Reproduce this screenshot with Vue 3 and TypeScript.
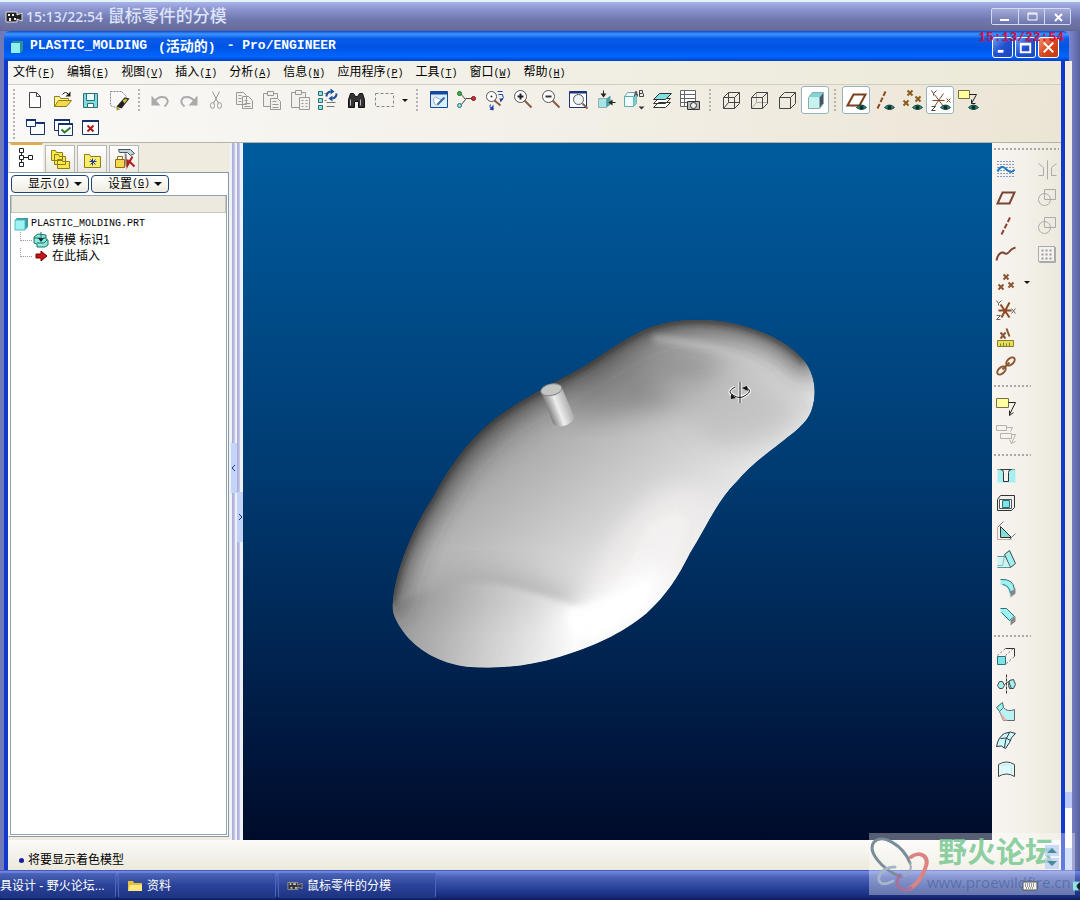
<script setup lang="ts">
interface Tool {
  id: string
  label: string
  pressed?: boolean
  arrow?: boolean
}
interface Menu {
  text: string
  key: string
}

const box = '-0.5 -0.5 28 28'
const eye =
  '<path d="M14 21q5-5 10 0q-5 4-10 0z" fill="#2f8f83" stroke="#16443f"/><circle cx="19" cy="21" r="2" fill="#0c2f2c"/>'
const cube = '<path d="M6 11h11v11H6zM6 11l5-5h11v11l-5 5M17 11l5-5"/>'
const lens =
  '<circle cx="12" cy="10" r="6" fill="#fff" stroke="#555"/><path d="M16 14l7 7" stroke="#8a5a44" stroke-width="2"/>'

const icons: Record<string, string> = {
  new: '<path d="M8 6h7l4 4v11H8zM15 6v4h4" fill="#fff" stroke="#444"/>',
  open: '<path d="M5 20V10h5l1 2h8v3" fill="#fff7a0" stroke="#8f7d18"/><path d="M5 20l4-6h13l-5 6z" fill="#f5d94a" stroke="#8f7d18"/><path d="M13 8q3-4 6 0" fill="none" stroke="#222"/><path d="M21 5v5h-5z" fill="#222"/>',
  save: '<path d="M6 7h14v14H6z" fill="#7fdbe0" stroke="#2c6f78"/><path d="M9 7h8v7H9z" fill="#e9fbfb" stroke="#2c6f78"/><path d="M10 17h6v4h-6z" fill="#fff" stroke="#2c6f78"/>',
  erase: '<path d="M5 5h11l5 5-8 12-8-3z" fill="#f8f8f8" stroke="#888" stroke-dasharray="2 1"/><path d="M11 20l8-9 5 1-8 10z" fill="#222"/><path d="M17 14l3-2 2 1-3 4z" fill="#c8bf3c"/><path d="M11 20l4 3-4 1z" fill="#a8a030"/>',
  undo: '<path d="M8 15q4-6 11-4q5 4-1 9" fill="none" stroke="#aaa" stroke-width="2"/><path d="M5 9v10h9z" fill="#aaa"/>',
  redo: '<path d="M20 15q-4-6-11-4q-5 4 1 9" fill="none" stroke="#aaa" stroke-width="2"/><path d="M23 9v10h-9z" fill="#aaa"/>',
  cut: '<g fill="none" stroke="#999"><path d="M10 5l6 12M17 5l-6 12"/><ellipse cx="10" cy="19" rx="2" ry="3"/><ellipse cx="17" cy="19" rx="2" ry="3"/></g>',
  copy: '<g fill="#f3f1ec" stroke="#999"><path d="M6 6h7l3 3v9H6zM12 10h6l4 4v8H12z"/><path d="M8 9h3M8 12h3M8 15h3M14 14h3M14 17h6M14 20h6"/></g>',
  paste: '<g fill="#f3f1ec" stroke="#999"><path d="M5 7h14v13H5z"/><path d="M9 5h6v4H9z"/><path d="M12 12h7l3 3v8H12z"/><path d="M14 15h4M14 18h6M14 21h6"/></g>',
  pasteSpecial: '<g fill="#f3f1ec" stroke="#999"><path d="M5 6h14v15H5z"/><path d="M9 4h6v4H9z"/><path d="M13 11h10v12H13z"/><path d="M15 14h2M19 14h2M15 17h2M19 17h2M15 20h2M19 20h2"/></g>',
  regen: '<g fill="#8fe0dc" stroke="#2c6f78"><path d="M4 5h4v4H4zM4 12h4v4H4zM4 19h4v4H4z"/></g><path d="M10 7h2M10 14h2M12 16h9M12 20h8" stroke="#777"/><path d="M12 10q0-4 4-5M22 7q0 4-4 5" fill="none" stroke="#1c4d9c" stroke-width="2"/><path d="M16 2v6l4-3zM18 9v6l-4-3z" fill="#1c4d9c"/>',
  find: '<path d="M6 13l2-6h3l2 3h2l2-3h3l2 6v8h-6v-6h-4v6H6z" fill="#333" stroke="#111"/><path d="M8 13v6M18 13v6" stroke="#bbb"/>',
  select: '<path d="M5 7h18v13H5z" fill="none" stroke="#888" stroke-dasharray="3 2"/>',
  repaint: '<path d="M6 5h17v16H6z" fill="#d9edfb" stroke="#16489c"/><path d="M6 5h17v3H6z" fill="#16489c"/><path d="M9 12q2-3 5 0q3 1 4 2l-4 4q-5 2-5-6z" fill="#fff" stroke="#9ab"/><path d="M13 18l7-7" stroke="#356aa8" stroke-width="2"/>',
  datum: '<path d="M8 7l5 6-5 6M13 12h9" fill="none" stroke="#444"/><circle cx="7" cy="7" r="2" fill="#3bb44a" stroke="#166b22"/><circle cx="7" cy="19" r="2" fill="#8fe0e8" stroke="#2c6f78"/><circle cx="21" cy="12" r="2" fill="#d03030" stroke="#801010"/>',
  orient: '<circle cx="11" cy="10" r="5" fill="#fff" stroke="#555"/><circle cx="11" cy="10" r="1" fill="#333"/><path d="M14 14l6 5" stroke="#8a5a44" stroke-width="2"/><path d="M17 5h5M18 8h4q2 3-1 6M10 18q-2 4 3 4" fill="none" stroke="#1c3fa8"/><path d="M13 18v6l-4-1zM19 12l4 0-3 4z" fill="#1c3fa8"/>',
  zoomIn: lens + '<path d="M9 10h6M12 7v6" stroke="#222" stroke-width="2"/>',
  zoomOut: lens + '<path d="M9 10h6" stroke="#333" stroke-width="2"/>',
  refit: '<path d="M5 5h17v16H5z" fill="#fff" stroke="#1a3478"/><path d="M5 5h17v2H5z" fill="#1a3478"/><circle cx="14" cy="13" r="5" fill="#eef4fa" stroke="#555"/><path d="M18 17l5 5" stroke="#8a5a44" stroke-width="2"/>',
  reorient: '<path d="M6 12h8v9H6z" fill="#a5e7e7" stroke="#9ab"/><path d="M14 12l4-3v9l-4 3z" fill="#4d9ea0"/><path d="M11 4v6M23 16h-5" stroke="#222"/><path d="M8 7h6l-3 4zM20 13v6l-4-3z" fill="#222"/>',
  saved: '<path d="M4 10h9v10H4zM4 10l3-4h9l-3 4M13 20l3-3V7" fill="#eefcfc" stroke="#6aa"/><path d="M13 10l3-3v9l-3 4z" fill="#7cc"/><path d="M14 10l1-5h1l1 5M15 8h2M19 4h3v3h-3V4v6h4V7" fill="none" stroke="#444"/><path d="M18 20h6l-3 3z" fill="#333"/>',
  layers: '<g stroke="#333"><path d="M5 21l5-5h12l-5 5zM5 17l5-5h12l-5 5z" fill="#fff"/><path d="M5 13l6-6h12l-6 6z" fill="#7fe0e0"/></g>',
  viewmgr: '<path d="M4 4h15v16H4zM4 8h15M4 12h15M4 16h15M8 4v16" fill="#fff" stroke="#666"/><path d="M11 15h12v8H11z" fill="#bbb" stroke="#333"/><circle cx="17" cy="19" r="3" fill="#eee" stroke="#333"/>',
  wire: `<g fill="none" stroke="#444">${cube}<path d="M11 6v10h11M11 16l-5 6"/></g>`,
  hidden: `<g fill="none" stroke="#444"><path d="M11 6v10h11M11 16l-5 6" stroke="#aaa"/>${cube}</g>`,
  nohidden: `<g fill="none" stroke="#444">${cube}</g>`,
  shaded: '<path d="M7 11l4-5h11l-4 5z" fill="#7fd4d4"/><path d="M7 11h11v11H7z" fill="#c6f3f0"/><path d="M18 11l4-5v11l-4 5z" fill="#456"/><path d="M7 22V11l4-5h11v11l-4 5z" fill="none" stroke="#8aa"/>',
  planeEye: '<path d="M5 19l6-11h12l-6 11z" fill="none" stroke="#7a3e1c" stroke-width="2"/>' + eye,
  axisEye: '<path d="M7 22L15 5" fill="none" stroke="#8a4a20" stroke-width="2" stroke-dasharray="5 2"/>' + eye,
  pointEye: '<path d="M9 4l5 5M14 4l-5 5M17 10l5 5M22 10l-5 5M5 14l5 5M10 14l-5 5" stroke="#8a5a20" stroke-width="2"/>' + eye,
  csysEye: '<path d="M6 14h12M8 8l9 12M17 7l-9 13M20 12l4 4M24 12l-4 4" stroke="#7a4a28"/><path d="M5 4l2 3 3-3M7 7v2M5 20h4l-4 4h4" fill="none" stroke="#444"/>' + eye,
  noteEye: '<path d="M4 4h11v8H4z" fill="#ffffa0" stroke="#777044"/><path d="M15 8h7l-5 9M17 13v4h4" fill="none" stroke="#222"/>' + eye,
  winNew: '<path d="M9 10v10h14V8h-9" fill="#fff" stroke="#14326c" stroke-width="1"/><path d="M5 5h9v7H5z" fill="#fff" stroke="#14326c"/><path d="M5 5h9v1H5zM15 8h8v1h-8z" fill="#14326c" stroke="#14326c"/>',
  winOk: '<path d="M5 5h15v11H5z" fill="#fff" stroke="#14326c"/><path d="M5 5h15v1H5z" stroke="#14326c"/><path d="M9 9h14v12H9z" fill="#fff" stroke="#14326c"/><path d="M9 9h14v1H9z" stroke="#14326c"/><path d="M12 15l3 3 6-5" fill="none" stroke="#2a7a2a" stroke-width="2"/>',
  winX: '<path d="M5 6h16v14H5z" fill="#fff" stroke="#14326c"/><path d="M5 6h16v1H5z" stroke="#14326c"/><path d="M10 11l6 6M16 11l-6 6" stroke="#b01818" stroke-width="2"/>',
  sketch: '<path d="M5 5h18M5 8h18M5 11h18M5 14h18M5 17h18M5 20h18" stroke="#1f3f9c" stroke-dasharray="1 2"/><path d="M5 15q4-8 9-2q5 5 8 0" fill="none" stroke="#1d7ac2" stroke-width="2"/>',
  plane: '<path d="M5 19l5-11h12l-5 11z" fill="none" stroke="#7a4634" stroke-width="2"/>',
  axis: '<path d="M9 22L18 4" fill="none" stroke="#8a4634" stroke-width="2" stroke-dasharray="5 2"/>',
  curve: '<path d="M4 20q2-9 7-8q3 3 6-1q2-3 6-4" fill="none" stroke="#7a4634" stroke-width="2"/>',
  points: '<path d="M11 6l5 5M16 6l-5 5M6 16l5 5M11 16l-5 5M16 14l5 5M21 14l-5 5" stroke="#8a5630" stroke-width="2"/>',
  csys: '<path d="M6 14h13M8 8l9 13M17 6l-8 15" stroke="#8a4a24" stroke-width="2"/><path d="M19 12l4 5M23 12l-4 5M4 4l2 3 3-3M6 7v2M4 19h4l-4 4h4" fill="none" stroke="#666"/>',
  analysis: '<path d="M8 8l5 6M13 8l-5 6M14 4l3 8" stroke="#8a5630" stroke-width="2"/><path d="M5 16h16v6H5z" fill="#e5df60" stroke="#8a8020"/><path d="M8 22v-3M11 22v-4M14 22v-3M17 22v-4" stroke="#8a8020"/>',
  link: '<g fill="none" stroke="#8a5630" stroke-width="2"><ellipse cx="9" cy="18" rx="5" ry="3" transform="rotate(-42 9 18)"/><ellipse cx="18" cy="9" rx="5" ry="3" transform="rotate(-42 18 9)"/><path d="M10 17l7-7"/></g>',
  note: '<path d="M4 5h12v9H4z" fill="#ffffa0" stroke="#777044"/><path d="M16 9h7l-6 12M17 17v5l4-3" fill="none" stroke="#222"/>',
  noteOff: '<g fill="none" stroke="#b5b0a8"><path d="M4 4h10v5H4zM8 12h11v5H8zM14 6h6l-2 4M19 13h4l-4 9M17 18l2 4 4-2"/></g>',
  hole: '<path d="M5 7h18v13H5z" fill="#a5f0f0"/><path d="M8 7q3 0 3 3v9h5v-9q0-3 3-3z" fill="#f4f2ee" stroke="#333"/><path d="M5 7h18" stroke="#444" stroke-dasharray="1 1"/>',
  shell: '<path d="M5 9l3-4h14v12l-3 3H5z" fill="#eee" stroke="#333"/><path d="M7 9h12v9H7z" fill="#fff" stroke="#555"/><path d="M10 10h7v7h-7z" fill="#7fe4e8" stroke="#2c6f78"/>',
  rib: '<path d="M8 8l11 11H8z" fill="#7fe0d8" stroke="#333"/><path d="M5 10v11h14" fill="none" stroke="#a55" stroke-dasharray="1 1"/><path d="M5 9l6-6M17 21l6-6" fill="none" stroke="#777"/>',
  draft: '<path d="M12 8l5-4 6 13-5 4z" fill="#9ff0f0" stroke="#444"/><path d="M5 10h7l-2 9H5M5 21h13" fill="none" stroke="#2c6f78"/><path d="M5 10h7l6 11H5z" fill="#b8f4f4" opacity=".6"/>',
  round: '<path d="M8 5q13-1 14 10l-5 6q0-10-9-11z" fill="#9ff0f0" /><path d="M8 5q13-1 14 10M10 10q7 1 8 9" fill="none" stroke="#2c6f78"/><path d="M23 14v5l-5 4v-6z" fill="#888"/>',
  chamfer: '<path d="M8 6h6l8 8-5 5-9-9z" fill="#9ff0f0"/><path d="M8 6h6l8 8-5 4-8-8" fill="none" stroke="#2c6f78"/><path d="M23 14v5l-5 4v-5z" fill="#888"/>',
  move: '<path d="M5 13h8v8H5z" fill="#7fe4e8" stroke="#2c6f78"/><path d="M13 5h9v8" fill="none" stroke="#333" stroke-width="1"/><path d="M5 12l8-7M13 12l8-7M14 20l8-7" fill="none" stroke="#777" stroke-dasharray="2 2"/>',
  mirror: '<path d="M14 3v20" stroke="#333" stroke-dasharray="3 1"/><path d="M5 14l2-4h3l2 4-2 3H7zM17 9l4-1 2 5-2 4h-4l-1-3z" fill="#9ff0f0" stroke="#444"/><path d="M12 13l4-3 3 7" fill="none" stroke="#444"/>',
  blend: '<path d="M4 8l6-5 1 5-4 4z" fill="#9ff0f0" stroke="#2c6f78"/><path d="M11 8q4 5 11 2v11H11L7 12z" fill="#b8f2f2" stroke="#666"/><path d="M7 12l8 9h-4z" fill="#e8b8b0"/>',
  boundary: '<path d="M4 19Q6 9 12 6q6-3 11 0q-5 4-6 9l-4 6q-4-4-9-2z" fill="#c8fafa" stroke="#334"/><path d="M8 11q6-2 10 2M12 20q0-8 5-15" fill="none" stroke="#334"/>',
  style: '<path d="M6 9q8-5 16 0v12q-8-5-16 0z" fill="#dffafa" stroke="#444"/><path d="M9 10q6-2 10 1v7" fill="none" stroke="#9dd" stroke-dasharray="1 1"/>',
  mergeOff: '<g fill="none" stroke="#aaa"><path d="M14 4v19M5 7l5 4v8H5M23 7l-5 4v8h5"/></g>',
  circleSquare: '<g fill="none" stroke="#aaa"><path d="M11 5h11v10H11z"/><circle cx="11" cy="15" r="6"/></g>',
  pattern: '<path d="M5 6h16v15H5zM21 6l1 1v15H6" fill="#f4f2ee" stroke="#aaa"/><path d="M8 10h11M8 14h11M8 18h11" stroke="#999" stroke-width="2" stroke-dasharray="2 2"/>',
  tree: '<g fill="#fff" stroke="#222"><path d="M10 11V8M10 18v-3M12 13h5"/><path d="M8 4h4v4H8zM8 11h4v4H8zM8 18h4v4H8zM17 11h4v4h-4z"/></g>',
  folders: '<g fill="#f8e84c" stroke="#8f7d18"><path d="M5 5h4l1 2h6v8H5zM8 9h4l1 2h6v8H8zM11 14h4l1 2h7v7H11z"/></g>',
  favorites: '<path d="M6 9h5l1 2h10v11H6z" fill="#f8ee6c" stroke="#8f7d18"/><path d="M14 13v7M11 16h7M12 14l5 5M17 14l-5 5" stroke="#223a9c"/>',
  connect: '<path d="M5 14h9v8H5z" fill="#f4d84c" stroke="#8f6d18"/><path d="M7 14v-3h5v3" fill="none" stroke="#8f6d18"/><path d="M8 4h12l4 4-4 2-3-3H9z" fill="#c8d4d4" stroke="#456"/><path d="M15 8l1 13" stroke="#888" stroke-width="2"/><path d="M22 11l-5 9v-6M18 15l6 6" stroke="#b02020" stroke-width="2" fill="none"/>',
}

const menus: Menu[] = [
  { text: '文件', key: 'F' },
  { text: '编辑', key: 'E' },
  { text: '视图', key: 'V' },
  { text: '插入', key: 'I' },
  { text: '分析', key: 'A' },
  { text: '信息', key: 'N' },
  { text: '应用程序', key: 'P' },
  { text: '工具', key: 'T' },
  { text: '窗口', key: 'W' },
  { text: '帮助', key: 'H' },
]

const groups: Tool[][] = [
  [
    { id: 'undo', label: '撤消' },
    { id: 'redo', label: '重做' },
    { id: 'cut', label: '剪切' },
    { id: 'copy', label: '复制' },
    { id: 'paste', label: '粘贴' },
    { id: 'pasteSpecial', label: '选择性粘贴' },
    { id: 'regen', label: '再生' },
    { id: 'find', label: '查找' },
    { id: 'select', label: '选取框', arrow: true },
  ],
  [
    { id: 'repaint', label: '重画' },
    { id: 'datum', label: '旋转中心' },
    { id: 'orient', label: '定向模式' },
    { id: 'zoomIn', label: '放大' },
    { id: 'zoomOut', label: '缩小' },
    { id: 'refit', label: '重新调整' },
    { id: 'reorient', label: '重定向' },
    { id: 'saved', label: '已保存视图' },
    { id: 'layers', label: '层' },
    { id: 'viewmgr', label: '视图管理器' },
  ],
  [
    { id: 'wire', label: '线框' },
    { id: 'hidden', label: '隐藏线' },
    { id: 'nohidden', label: '无隐藏线' },
    { id: 'shaded', label: '着色', pressed: true },
  ],
  [
    { id: 'planeEye', label: '平面显示', pressed: true },
    { id: 'axisEye', label: '轴显示' },
    { id: 'pointEye', label: '点显示' },
    { id: 'csysEye', label: '坐标系显示', pressed: true },
    { id: 'noteEye', label: '注释显示' },
  ],
]
const fileTools: Tool[] = [
  { id: 'new', label: '新建' },
  { id: 'open', label: '打开' },
  { id: 'save', label: '保存' },
  { id: 'erase', label: '拭除' },
]
const windowTools: Tool[] = [
  { id: 'winNew', label: '新建窗口' },
  { id: 'winOk', label: '激活窗口' },
  { id: 'winX', label: '关闭窗口' },
]
const sideGroups: Tool[][] = [
  [
    { id: 'sketch', label: '草绘' },
    { id: 'plane', label: '基准平面' },
    { id: 'axis', label: '基准轴' },
    { id: 'curve', label: '基准曲线' },
    { id: 'points', label: '基准点', arrow: true },
    { id: 'csys', label: '坐标系' },
    { id: 'analysis', label: '分析特征' },
    { id: 'link', label: '参照' },
  ],
  [
    { id: 'note', label: '注释' },
    { id: 'noteOff', label: '注释元素' },
  ],
  [
    { id: 'hole', label: '孔' },
    { id: 'shell', label: '壳' },
    { id: 'rib', label: '筋' },
    { id: 'draft', label: '拔模' },
    { id: 'round', label: '倒圆角' },
    { id: 'chamfer', label: '倒角' },
  ],
  [
    { id: 'move', label: '拉伸' },
    { id: 'mirror', label: '旋转' },
    { id: 'blend', label: '扫描' },
    { id: 'boundary', label: '边界混合' },
    { id: 'style', label: '造型' },
  ],
]
const editTools: Tool[] = [
  { id: 'mergeOff', label: '镜像' },
  { id: 'circleSquare', label: '合并' },
  { id: 'circleSquare', label: '修剪' },
  { id: 'pattern', label: '阵列' },
]
const tabs: Tool[] = [
  { id: 'tree', label: '模型树', pressed: true },
  { id: 'folders', label: '文件夹浏览器' },
  { id: 'favorites', label: '收藏夹' },
  { id: 'connect', label: '连接' },
]
</script>

<template>
  <div class="desktop">
    <header class="outer-title">
      <svg class="cam" viewBox="0 0 18 14" aria-hidden="true">
        <path d="M1 2h11v3l5-2v8l-5-2v3H1z" fill="#222" stroke="#ddd" />
        <path d="M3 4h2v2H3zM7 4h2v2H7zM4 8h2v3H4zM9 8h2v2H9z" fill="#eee" />
      </svg>
      <span class="outer-text"><span class="clock">15:13/22:54</span> 鼠标零件的分模</span>
      <div class="outer-buttons">
        <button type="button" aria-label="最小化"><svg viewBox="0 0 14 12"><path d="M2 9h9" stroke="#fff" stroke-width="2" /></svg></button>
        <button type="button" aria-label="最大化"><svg viewBox="0 0 14 12"><path d="M3 2h9v7H3zM3 3h9" fill="none" stroke="#fff" /></svg></button>
        <button type="button" aria-label="关闭"><svg viewBox="0 0 14 12"><path d="M4 3l7 7M11 3l-7 7" stroke="#fff" stroke-width="2" /></svg></button>
      </div>
    </header>

    <div class="stage">
      <div class="window">
        <div class="title">
          <svg class="cube" viewBox="0 0 14 14" aria-hidden="true"><path d="M1 4l2-3h10v9l-2 3H1z" fill="#2b8f98" /><path d="M1 3h9v10H1z" fill="#8ff0ee" /></svg>
          <h1><span class="mono">PLASTIC_MOLDING</span><span><span class="mono">(</span>活动的<span class="mono">)</span></span><span class="mono">- Pro/ENGINEER</span></h1>
          <div class="win-buttons">
            <button type="button" aria-label="最小化"><svg viewBox="0 0 20 20"><path d="M5 14h6" stroke="#fff" stroke-width="3" /></svg></button>
            <button type="button" aria-label="最大化"><svg viewBox="0 0 20 20"><path d="M5 6h10v9H5zM5 7h10" fill="none" stroke="#fff" stroke-width="2" /></svg></button>
            <button type="button" class="close" aria-label="关闭"><svg viewBox="0 0 20 20"><path d="M5 5l10 10M15 5L5 15" stroke="#fff" stroke-width="2" /></svg></button>
          </div>
          <span class="stamp">15:13/22:54</span>
        </div>

        <div class="inner">
          <div class="app">
            <nav class="menubar">
              <button v-for="m in menus" :key="m.key" type="button">{{ m.text }}<span class="latin">(<u>{{ m.key }}</u>)</span></button>
            </nav>

            <div class="toolbar">
              <div class="file-group">
                <i class="grip"></i>
                <div>
                  <div class="tools">
                    <button v-for="t in fileTools" :key="t.id" type="button" class="tool" :aria-label="t.label"><svg :viewBox="box" v-html="icons[t.id]"></svg></button>
                  </div>
                  <div class="tools">
                    <button v-for="t in windowTools" :key="t.id" type="button" class="tool" :aria-label="t.label"><svg :viewBox="box" v-html="icons[t.id]"></svg></button>
                  </div>
                </div>
              </div>
              <div v-for="(g, i) in groups" :key="i" class="tools">
                <i class="grip"></i>
                <template v-for="t in g" :key="t.id">
                  <button type="button" class="tool" :class="{ pressed: t.pressed }" :aria-label="t.label"><svg :viewBox="box" v-html="icons[t.id]"></svg></button>
                  <button v-if="t.arrow" type="button" class="drop" aria-label="更多"><i class="caret"></i></button>
                </template>
              </div>
            </div>

            <main class="work">
              <aside class="navigator">
                <div class="tabs">
                  <button v-for="t in tabs" :key="t.id" type="button" :class="{ active: t.pressed }" :aria-label="t.label"><svg :viewBox="box" v-html="icons[t.id]"></svg></button>
                </div>
                <div class="panel">
                  <div class="panel-buttons">
                    <button type="button">显示<span class="latin">(<u>O</u>)</span><i class="caret"></i></button>
                    <button type="button">设置<span class="latin">(<u>G</u>)</span><i class="caret"></i></button>
                  </div>
                  <div class="tree">
                    <div class="tree-head"></div>
                    <ul>
                      <li>
                        <svg class="node" viewBox="0 0 14 14" aria-hidden="true"><path d="M1 3l2-2h11v9l-3 3H1z" fill="#3c9aa2" /><path d="M1 3h10v10H1z" fill="#9cf4f2" stroke="#5bb" /></svg>
                        <span class="latin">PLASTIC_MOLDING.PRT</span>
                      </li>
                      <li class="child">
                        <svg class="node" viewBox="0 0 16 16" aria-hidden="true"><path d="M1 5l4-3 8 1v4l2 1v5l-3 2H4v-3L1 11z" fill="#8ee8d8" stroke="#1f6e68" /><path d="M8 0v9M1 6h6M10 6h3M4 11h7l3-3" fill="none" stroke="#1f6e68" /><path d="M5 6h6l-3 4z" fill="#134" /></svg>
                        铸模 标识1
                      </li>
                      <li class="child last">
                        <svg class="node" viewBox="0 0 16 16" aria-hidden="true"><path d="M3 6h5V3l6 5-6 5v-3H3z" fill="#c81414" stroke="#700" /></svg>
                        在此插入
                      </li>
                    </ul>
                  </div>
                </div>
              </aside>

              <div class="splitter">
                <i class="rail"></i>
                <i class="rail"></i>
                <button type="button" class="fold left" aria-label="折叠"><svg viewBox="0 0 6 8"><path d="M4 1L1 4l3 3" fill="none" stroke="#123a80" /></svg></button>
                <button type="button" class="fold right" aria-label="展开"><svg viewBox="0 0 6 8"><path d="M2 1l3 3-3 3" fill="none" stroke="#123a80" /></svg></button>
              </div>

              <section class="viewport" aria-label="PLASTIC_MOLDING">
                <svg viewBox="243 143 749 697" preserveAspectRatio="xMidYMid slice">
                  <defs>
                    <linearGradient id="body" gradientUnits="userSpaceOnUse" x1="360" y1="260" x2="880" y2="900">
                      <stop offset="0" stop-color="#848484" />
                      <stop offset=".25" stop-color="#b0b0b0" />
                      <stop offset=".6" stop-color="#d4d4d4" />
                      <stop offset="1" stop-color="#fcfafa" />
                    </linearGradient>
                    <linearGradient id="hump" gradientUnits="userSpaceOnUse" x1="60" y1="860" x2="600" y2="930">
                      <stop offset="0" stop-color="#8a8a8a" />
                      <stop offset=".5" stop-color="#c8c8c8" />
                      <stop offset="1" stop-color="#fff" />
                    </linearGradient>
                    <linearGradient id="peg" gradientUnits="userSpaceOnUse" x1="496" y1="300" x2="575" y2="270">
                      <stop offset="0" stop-color="#666" />
                      <stop offset=".45" stop-color="#eee" />
                      <stop offset="1" stop-color="#999" />
                    </linearGradient>
                    <filter id="soft" x="-30%" y="-30%" width="160%" height="160%"><feGaussianBlur stdDeviation="36" /></filter>
                    <filter id="fine" x="-30%" y="-30%" width="160%" height="160%"><feGaussianBlur stdDeviation="10" /></filter>
                    <path id="shape" d="M38 880C45 780 100 650 160 560C215 455 275 385 330 338C420 265 530 215 610 170C680 125 720 95 790 60C860 28 960 22 1050 38C1150 58 1230 100 1275 155C1305 195 1312 250 1295 300C1280 345 1230 375 1190 408C1140 445 1100 480 1070 515C1010 575 980 650 930 730C895 800 860 855 800 910C720 975 640 1010 540 1040C440 1070 350 1078 260 1070C180 1060 110 1020 70 965C45 930 35 905 38 880Z" />
                    <clipPath id="clip"><use href="#shape" /></clipPath>
                  </defs>
                  <g transform="translate(380 310) scale(.33333)" clip-path="url(#clip)">
                    <use href="#shape" fill="url(#body)" />
                    <path d="M620 160Q850 80 1040 170Q900 330 560 320Z" fill="#6c6c6c" opacity=".55" filter="url(#soft)" />
                    <path d="M800 200Q1100 140 1270 300Q1200 420 1000 400Z" fill="#b8b8b8" opacity=".6" filter="url(#soft)" />
                    <path d="M620 820Q720 620 850 540Q940 520 990 570L900 760L780 920Z" fill="#f4f0f0" opacity=".7" filter="url(#soft)" />
                    <path d="M800 650Q880 580 930 640L880 800L700 850Z" fill="#f6f3f3" opacity=".6" filter="url(#fine)" />
                    <path d="M60 820Q300 700 600 860L600 920L60 920Z" fill="#8c8c8c" opacity=".4" filter="url(#soft)" />
                    <path d="M20 900Q180 800 340 820Q480 845 610 900L600 1090H30Z" fill="url(#hump)" opacity=".75" filter="url(#fine)" />
                    <path d="M510 930Q640 870 820 760L880 840L650 1010Z" fill="#fff" filter="url(#soft)" />
                    <path d="M560 900Q700 860 820 800L800 900L640 990Q560 1000 560 900Z" fill="#fff" opacity=".8" filter="url(#fine)" />
                    <path d="M20 900C30 780 90 650 160 540C215 440 275 375 330 328C420 255 530 205 610 160C680 115 720 90 790 50C860 18 960 12 1050 28C1160 48 1250 90 1300 180" fill="none" stroke="#303030" stroke-width="76" opacity=".8" filter="url(#soft)" />
                    <path d="M36 880C45 780 100 650 160 560C215 455 275 385 330 338C420 265 530 215 610 170C680 125 720 95 790 60C860 28 960 22 1050 38C1150 58 1230 100 1275 155" fill="none" stroke="#222" stroke-width="14" opacity=".8" filter="url(#fine)" />
                    <path d="M820 85Q950 95 1060 135Q1200 185 1280 300" fill="none" stroke="#ccc" stroke-width="22" opacity=".5" filter="url(#fine)" />
                  </g>
                  <g transform="translate(380 310) scale(.33333)">
                    <path d="M483 243L520 343Q540 355 562 344Q583 332 582 318L545 232z" fill="url(#peg)" />
                    <ellipse cx="514" cy="239" rx="32" ry="17" fill="#c4c6c4" stroke="#888" stroke-width="3" transform="rotate(-12 514 239)" />
                  </g>
                  <g fill="none">
                    <path d="M740 382v21M735 387q-9 5-2 8q7 5 13 0q7-4 0-8" stroke="#fff" stroke-width="3" />
                    <path d="M740 382v21M735 387q-9 5-2 8q7 5 13 0q7-4 0-8" stroke="#111" />
                    <path d="M742 388l5-2 1 5zM731 394l5 4-5 1z" fill="#111" />
                  </g>
                </svg>
              </section>

              <div class="sidebar">
                <i class="hgrip"></i>
                <div class="side-cols">
                  <div class="side-col">
                    <template v-for="(g, i) in sideGroups" :key="i">
                      <i v-if="i > 0" class="hgrip"></i>
                      <div v-for="t in g" :key="t.id" class="side-row">
                        <button type="button" class="tool" :aria-label="t.label"><svg :viewBox="box" v-html="icons[t.id]"></svg></button>
                        <button v-if="t.arrow" type="button" class="drop" aria-label="更多"><i class="caret"></i></button>
                      </div>
                    </template>
                  </div>
                  <div class="side-col">
                    <button v-for="t in editTools" :key="t.label" type="button" class="tool" :aria-label="t.label"><svg :viewBox="box" v-html="icons[t.id]"></svg></button>
                  </div>
                </div>
              </div>
            </main>

            <footer class="status"><i class="dot"></i>将要显示着色模型</footer>
          </div>
          <div class="behind">
            <i class="stub"></i>
          </div>
        </div>
      </div>
    </div>

    <nav class="taskbar">
      <button type="button" class="cut-off"><span>具设计 - 野火论坛...</span></button>
      <button type="button">
        <svg viewBox="0 0 16 14" aria-hidden="true"><path d="M1 12V2h5l1 2h8v8z" fill="#e8c040" /><path d="M1 12l2-6h12v6z" fill="#ffe97c" /></svg>
        资料
      </button>
      <button type="button">
        <svg viewBox="0 0 18 14" aria-hidden="true"><path d="M1 3h11v3l5-2v6l-5-2v3H1z" fill="#333" stroke="#999" /><path d="M3 4h2v2H3zM7 4h3v2H7zM4 8h2v2H4zM9 8h2v2H9z" fill="#ccc" /></svg>
        鼠标零件的分模
      </button>
      <svg class="keyboard" viewBox="0 0 16 10" aria-hidden="true"><path d="M1 1h14v8H1z" fill="#f4f4ec" stroke="#555" /><path d="M3 3h10M3 5h10M4 7h8" stroke="#444" stroke-dasharray="1 1" /></svg>
      <svg class="tray" viewBox="0 0 8 12" aria-hidden="true"><path d="M0 1h8v10H0z" fill="#8fe4e0" /><path d="M8 2q-7 4 0 9" fill="#123" stroke="#234" /></svg>
    </nav>

    <div class="watermark">
      <svg class="rings" viewBox="0 0 60 62" aria-hidden="true">
        <g fill="none" stroke-linecap="round">
          <path d="M32 44C12 36-2 18 5 9C13 0 34 12 41 30" stroke="#7a8e9a" stroke-width="3" />
          <path d="M41 30Q44 38 36 43" stroke="#9aabb8" stroke-width="2" />
          <path d="M26 34C12 34 6 46 12 50C15 52 20 50 24 48" stroke="#a4b6c8" stroke-width="3" />
          <path d="M42 24C50 18 62 22 56 36C52 46 46 53 40 56" stroke="#dc8484" stroke-width="4" />
          <path d="M42 55Q34 60 29 53Q27 48 31 42" stroke="#a8709c" stroke-width="3" />
        </g>
      </svg>
      <div class="mark-text"><strong>野火论坛</strong><span>www.proewildfire.cn</span></div>
      <svg class="nudges" viewBox="0 0 14 24" aria-hidden="true">
        <path d="M0 0h14v11H0zM0 13h14v11H0z" fill="#b8ccfa" opacity=".7" />
        <path d="M2 8l5-5 5 5zM2 16h10l-5 5z" fill="#2a7a80" opacity=".8" />
      </svg>
    </div>
  </div>
</template>

<style>
body {
  margin: 0;
}
</style>

<style scoped>
.desktop {
  position: relative;
  display: flex;
  flex-direction: column;
  min-height: 100vh;
  overflow: hidden;
  background: #6e76b4;
  color: #000;
  font: 12px/16px "Liberation Sans", "Noto Sans CJK SC", sans-serif;
}
button {
  margin: 0;
  padding: 0;
  border: 0;
  background: none;
  color: inherit;
  font: inherit;
}
svg {
  display: block;
}
.latin {
  font-family: "Liberation Mono", monospace;
  font-size: 10px;
}
.outer-title {
  display: flex;
  align-items: center;
  gap: 3px;
  height: 29px;
  padding: 0 9px 0 5px;
  border-top: 2px solid #e4f4f6;
  background: linear-gradient(#a9b2ec, #8d95cf 25%, #7078b0 60%, #686c98 95%, #5560a0);
}
.cam {
  width: 18px;
  height: 14px;
}
.outer-text {
  flex: 1;
  color: #dde4fb;
  font-weight: 500;
  font-size: 17px;
  line-height: 20px;
}
.clock {
  font-family: "Noto Sans", sans-serif;
  font-size: 14px;
}
.outer-buttons {
  display: flex;
  height: 15px;
  border: 1px solid #d4daf4;
  border-radius: 2px;
}
.outer-buttons button {
  display: grid;
  place-items: center;
  width: 26px;
  background: linear-gradient(#a5acd8, #6d75ac);
}
.outer-buttons button + button {
  border-left: 1px solid #d4daf4;
}
.outer-buttons svg {
  width: 14px;
  height: 12px;
}
.stage {
  display: flex;
  flex: 1;
  padding: 0 8px 0 4px;
  background: linear-gradient(90deg, #7078b8, #7c86d0 99%, #5a629c);
}
.window {
  display: flex;
  flex: 1;
  flex-direction: column;
  min-width: 0;
}
.title {
  position: relative;
  display: flex;
  align-items: center;
  gap: 6px;
  height: 30px;
  margin-right: 3px;
  padding: 2px 7px 0 6px;
  box-sizing: border-box;
  border-radius: 6px 6px 0 0;
  background: linear-gradient(#0a4bd0, #3d95ff 10%, #0a5ce8 25%, #0054e3 55%, #0066ff 85%, #0040c8);
}
.cube {
  width: 14px;
  height: 14px;
}
.title h1 {
  display: flex;
  flex: 1;
  gap: 11px;
  margin: 0;
  color: #fff;
  font-size: 14px;
  line-height: 20px;
  white-space: nowrap;
}
.mono {
  font-family: "Liberation Mono", monospace;
  font-size: 13px;
}
.win-buttons {
  display: flex;
  gap: 2px;
  padding-right: 3px;
}
.win-buttons button {
  width: 21px;
  height: 21px;
  border: 1px solid #fff;
  border-radius: 3px;
  background: linear-gradient(135deg, #6c9cf4, #2050d0 50%, #1c48c0);
}
.win-buttons .close {
  background: linear-gradient(135deg, #f09070, #d8451c 55%, #c03810);
}
.stamp {
  position: absolute;
  top: -1px;
  right: 5px;
  color: #d0103c;
  font: bold 13px/16px "Liberation Mono", monospace;
}
.inner {
  display: flex;
  flex: 1;
}
.app {
  display: flex;
  flex: 1;
  flex-direction: column;
  min-width: 0;
  border: solid #1238cc;
  border-width: 0 4px;
  background: #efecdf;
}
.behind {
  display: flex;
  flex-direction: column;
  justify-content: flex-end;
  width: 7px;
  background: linear-gradient(#f2eee4, #e8e6e0);
}
.stub {
  height: 78px;
  background: linear-gradient(#b9c8f8 16px, #fff 16px 56px, #c3d0f8 56px);
}
.menubar {
  display: flex;
  gap: 12px;
  height: 24px;
  padding: 0 5px;
  box-sizing: border-box;
  align-items: center;
  border-bottom: 1px solid #d2cfc2;
  background: linear-gradient(90deg, #f7f6f2, #ece9d8);
}
.menubar button {
  white-space: nowrap;
}
.toolbar {
  display: flex;
  align-items: flex-start;
  padding-top: 1px;
  border-bottom: 1px solid #b5b2a5;
  background: linear-gradient(100deg, #faf9f7, #f3f0e8 50%, #ebe5d5);
}
.file-group,
.tools {
  display: flex;
}
.grip {
  align-self: stretch;
  width: 2px;
  margin: 3px 6px 3px 5px;
  background: repeating-linear-gradient(#b4b3ae 0 2px, transparent 2px 4px);
}
.tool {
  width: 28px;
  height: 28px;
  box-sizing: border-box;
}
.tool svg {
  width: 28px;
  height: 28px;
}
.pressed {
  border: 1px solid #98b2c4;
  border-radius: 3px;
  background: #fff;
}
.pressed svg {
  margin: -1px;
}
.drop {
  display: grid;
  place-items: center;
  width: 13px;
  height: 28px;
}
.caret {
  width: 0;
  border: 4px solid transparent;
  border-top-color: #111;
  border-bottom: 0;
}
.drop .caret {
  border-width: 3px 3px 0;
}
.work {
  display: flex;
  flex: 1;
}
.navigator {
  display: flex;
  flex-direction: column;
  width: 221px;
  padding-bottom: 3px;
}
.tabs {
  display: flex;
  gap: 2px;
  height: 29px;
  padding-left: 2px;
  align-items: flex-end;
}
.tabs button {
  width: 30px;
  height: 27px;
  box-sizing: border-box;
  border: 1px solid #b4b8b8;
  border-bottom: 0;
  background: linear-gradient(#fff, #eceadf);
}
.tabs .active {
  width: 33px;
  height: 29px;
  border-color: #fff;
  border-top: 2px solid #f0a830;
  background: #fff;
}
.tabs svg {
  width: 28px;
  height: 28px;
  margin-top: -1px;
}
.panel {
  display: flex;
  flex: 1;
  flex-direction: column;
  border: 1px solid #8a9aa4;
  border-left-color: #fff;
  background: #fff;
}
.panel-buttons {
  display: flex;
  gap: 2px;
  padding: 2px 2px 1px;
}
.panel-buttons button {
  display: flex;
  align-items: center;
  justify-content: flex-end;
  width: 78px;
  height: 18px;
  padding-right: 6px;
  box-sizing: border-box;
  border: 1px solid #1d4478;
  border-radius: 4px;
  background: linear-gradient(#fff, #eeece0);
}
.panel-buttons .caret {
  margin-left: 4px;
}
.tree {
  flex: 1;
  margin: 1px;
  border: 1px solid #8fa3b4;
}
.tree-head {
  height: 16px;
  border: 1px solid #c8c6ba;
  border-top: 0;
  background: #ece9de;
}
.tree ul {
  margin: 0;
  padding: 3px 0 0 3px;
  list-style: none;
}
.tree li {
  display: flex;
  align-items: center;
  gap: 3px;
  height: 16px;
}
.tree .node {
  width: 14px;
  height: 14px;
}
.tree .child .node {
  width: 16px;
  height: 16px;
}
.tree .child::before {
  content: "";
  align-self: flex-start;
  width: 11px;
  height: 8px;
  margin-left: 6px;
  margin-right: -2px;
  border: dotted #999;
  border-width: 0 0 1px 1px;
}
.splitter {
  position: relative;
  display: flex;
  gap: 2px;
  width: 14px;
  padding-left: 3px;
  box-sizing: border-box;
  background: #eef1f6;
}
.rail {
  width: 3px;
  background: linear-gradient(90deg, #a8a8d8, #c9cbe8);
}
.fold {
  position: absolute;
  display: grid;
  place-items: center;
  width: 6px;
  height: 50px;
  background: #c3d4f8;
}
.fold svg {
  width: 6px;
  height: 8px;
}
.fold.left {
  top: 43%;
  left: 2px;
}
.fold.right {
  top: 50%;
  right: 0;
}
.viewport {
  position: relative;
  flex: 1;
  min-width: 0;
  background: linear-gradient(#005c9e, #004e8c 20%, #003a70 48%, #00224e 75%, #000b2a);
}
.viewport > svg {
  position: absolute;
  inset: 0;
  width: 100%;
  height: 100%;
}
.sidebar {
  width: 69px;
  background: linear-gradient(90deg, #f8f5f2, #f3f0e8 50%, #ece8dc);
}
.hgrip {
  display: block;
  height: 2px;
  margin: 5px 2px 6px;
  background: repeating-linear-gradient(90deg, #aaa8a4 0 2px, transparent 2px 4px);
}
.side-cols {
  display: flex;
}
.side-col {
  display: flex;
  flex-direction: column;
  width: 41px;
}
.side-col + .side-col {
  width: 28px;
}
.side-row {
  display: flex;
}
.status {
  display: flex;
  align-items: center;
  gap: 4px;
  height: 30px;
  padding: 10px 11px 0;
  box-sizing: border-box;
  background: linear-gradient(#fbfaf8, #ece9dc);
}
.dot {
  width: 5px;
  height: 5px;
  border-radius: 50%;
  background: #1c1c9c;
}
.taskbar {
  display: flex;
  align-items: center;
  gap: 2px;
  height: 30px;
  box-sizing: border-box;
  border-top: 1px solid #4458c0;
  background: linear-gradient(#7488e4, #4c62b8 20%, #2c449c 55%, #1a2e80 85%, #0c1c5c);
}
.taskbar button {
  display: flex;
  align-items: center;
  gap: 4px;
  width: 158px;
  height: 25px;
  padding-left: 8px;
  box-sizing: border-box;
  border: 1px solid #4c66bc;
  border-bottom-color: #203890;
  border-radius: 2px;
  background: linear-gradient(#4a62b4, #2a4298 50%, #1e3484);
  color: #fff;
}
.taskbar button svg {
  width: 16px;
  height: 14px;
}
.taskbar .cut-off {
  width: 116px;
  padding-left: 0;
  border-left: 0;
}
.keyboard,
.tray {
  position: relative;
  z-index: 2;
}
.keyboard {
  width: 16px;
  height: 10px;
  margin-left: auto;
}
.tray {
  width: 7px;
  height: 12px;
  margin-left: 33px;
}
.watermark {
  position: absolute;
  z-index: 1;
  right: 5px;
  bottom: 5px;
  display: flex;
  width: 206px;
  height: 62px;
  background: rgba(255, 255, 255, 0.34);
}
.rings {
  flex: none;
  width: 60px;
  height: 62px;
}
.mark-text {
  display: flex;
  flex-direction: column;
  margin-left: -2px;
  white-space: nowrap;
}
.mark-text strong {
  padding-left: 11px;
  color: rgba(122, 200, 146, 0.85);
  font-size: 29px;
  line-height: 40px;
}
.mark-text span {
  color: rgba(74, 100, 160, 0.7);
  font: 15px/18px "Open Sans", sans-serif;
}
.nudges {
  position: absolute;
  top: 12px;
  right: 16px;
  width: 14px;
  height: 24px;
}
</style>
